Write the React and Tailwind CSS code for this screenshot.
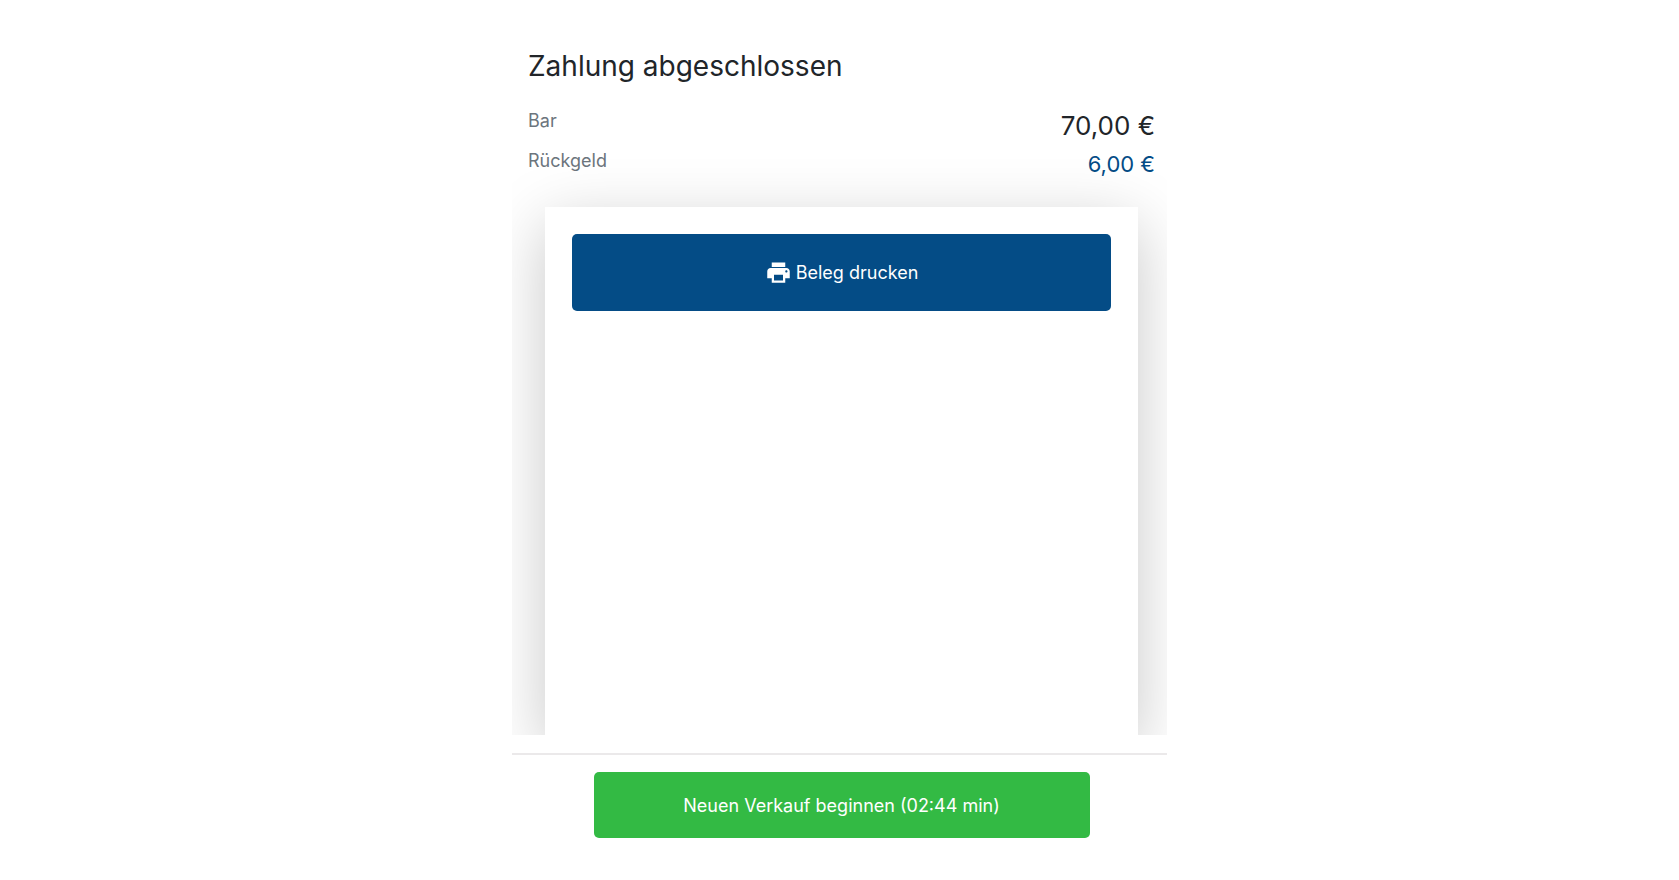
import React from 'react'
import { useState, useEffect } from 'react'
import { MdPrint } from 'react-icons/md'

const payments = [
  { label: 'Bar', amount: '70,00 €', className: 'text-[26px] leading-10 text-[#212529]' },
  { label: 'Rückgeld', amount: '6,00 €', className: 'text-[22px] leading-9 text-[#044c86]' }
]

const formatTime = (seconds) => {
  const min = String(Math.floor(seconds / 60)).padStart(2, '0')
  const sec = String(seconds % 60).padStart(2, '0')
  return `${min}:${sec}`
}

const App = () => {
  const [remaining, setRemaining] = useState(164)

  useEffect(() => {
    const reset = () => setRemaining(164)
    window.addEventListener('focus', reset)
    return () => window.removeEventListener('focus', reset)
  }, [])

  return (
    <div className="min-h-screen flex justify-center bg-white font-['Inter','Liberation_Sans',sans-serif] text-[#212529]">
      <main className="w-full max-w-[655px] flex flex-col">

        {/* Summary and receipt */}
        <section className="flex-1 flex flex-col overflow-hidden pt-12">
          <h1 className="pl-4 text-[28px] leading-9">Zahlung abgeschlossen</h1>

          <dl className="mt-[22px] pl-4 pr-3">
            {payments.map((p) => (
              <div key={p.label} className="flex items-start justify-between">
                <dt className="text-[18px] leading-[30px] text-[#6c757d]">{p.label}</dt>
                <dd className={p.className}>{p.amount}</dd>
              </div>
            ))}
          </dl>

          <div className="flex-1 mt-[25px] ml-[33px] mr-[29px] p-[27px] bg-white shadow-[0_17px_60px_rgba(0,0,0,0.22)]">
            <button
              type="button"
              onClick={() => window.print()}
              className="w-full h-[77px] flex items-center justify-center gap-1 rounded-[5px] bg-[#044c86] text-[18px] text-white"
            >
              <MdPrint size={27} />
              <span>Beleg drucken</span>
            </button>
          </div>
        </section>

        {/* Footer */}
        <footer className="mt-[18px] pt-[17px] pb-[42px] pl-1 flex justify-center border-t-2 border-[#ebe9ea]">
          <button
            type="button"
            onClick={() => setRemaining(164)}
            className="w-full max-w-[496px] h-[66px] rounded-[5px] bg-[#33ba44] text-[18px] text-white"
          >
            Neuen Verkauf beginnen ({formatTime(remaining)} min)
          </button>
        </footer>

      </main>
    </div>
  )
}

export default App
